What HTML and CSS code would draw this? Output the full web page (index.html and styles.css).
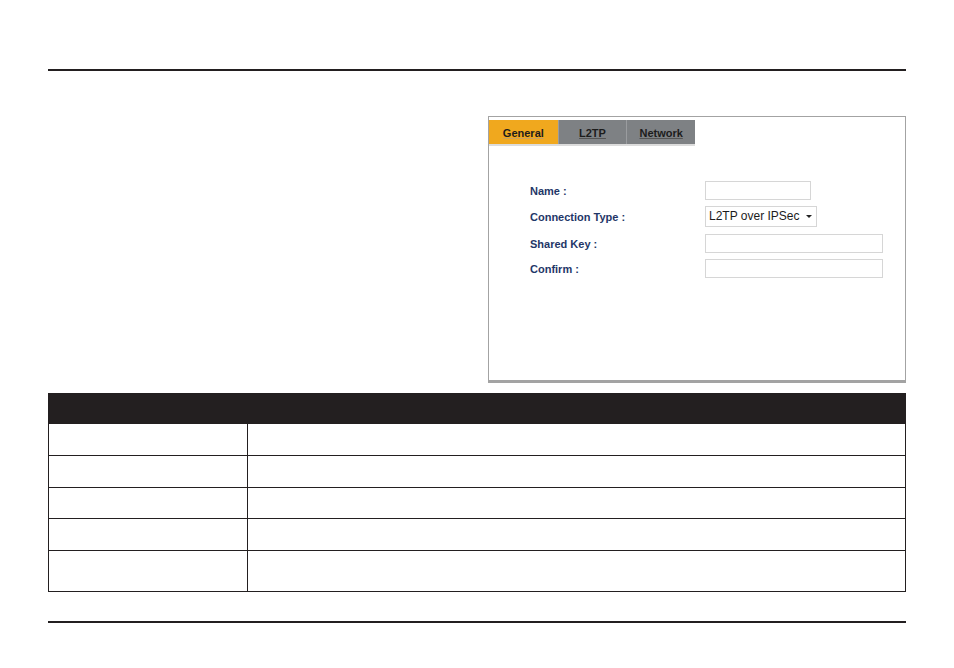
FILE: index.html
```html
<!DOCTYPE html>
<html lang="en">

<head>
    <meta charset="UTF-8">
    <meta name="viewport" content="width=device-width, initial-scale=1.0">
    <title>L2TP over IPSec</title>
    <link rel="stylesheet" href="styles.css">
</head>

<body>
    <div class="page">
        <div class="rule top"></div>

        <div class="figure">
            <div class="shot">
                <div class="tabs">
                    <span class="tab active">General</span>
                    <span class="tab">L2TP</span>
                    <span class="tab">Network</span>
                </div>
                <div class="form">
                    <label>Name :</label>
                    <div class="field short"></div>
                    <label>Connection Type :</label>
                    <div class="select">L2TP over IPSec <span class="caret"></span></div>
                    <label>Shared Key :</label>
                    <div class="field"></div>
                    <label>Confirm :</label>
                    <div class="field"></div>
                </div>
            </div>
        </div>

        <table class="spec">
            <tr class="head"><th></th><th></th></tr>
            <tr class="r1"><td></td><td></td></tr>
            <tr class="r2"><td></td><td></td></tr>
            <tr class="r3"><td></td><td></td></tr>
            <tr class="r4"><td></td><td></td></tr>
            <tr class="r5"><td></td><td></td></tr>
        </table>

        <div class="rule bottom"></div>
    </div>
</body>

</html>
```

FILE: styles.css
```css
* {
    margin: 0;
    padding: 0;
    box-sizing: border-box;
}

body {
    background: #fff;
    font-family: 'Liberation Sans', Arial, sans-serif;
}

.page {
    width: 954px;
    padding: 0 48px;
}

.rule {
    height: 2px;
    background: #231f20;
}

.rule.top {
    margin-top: 69px;
}

.rule.bottom {
    margin-top: 29px;
}

.figure {
    display: flex;
    justify-content: flex-end;
    margin-top: 45px;
}

.shot {
    width: 418px;
    height: 267px;
    border: 1px solid #a3a3a3;
    border-bottom-width: 3px;
    padding-top: 3px;
}

.tabs {
    display: flex;
    width: 206px;
    height: 26px;
    border-bottom: 2px solid #dcdcdc;
}

.tab {
    width: 69px;
    height: 24px;
    line-height: 26px;
    text-align: center;
    background: #7e8184;
    color: #1c1c1c;
    font-size: 11px;
    font-weight: bold;
    text-decoration: underline;
    text-decoration-color: #555;
}

.tab + .tab {
    border-left: 1px solid #9a9c9f;
}

.tab.active {
    background: #f0a81e;
    border-left: none;
    text-decoration-color: #c9a060;
}

.form {
    display: grid;
    grid-template-columns: 175px auto;
    row-gap: 6px;
    align-items: center;
    padding: 35px 0 0 41px;
}

.form label {
    font-size: 11px;
    font-weight: bold;
    color: #1f3768;
}

.field {
    width: 178px;
    height: 19px;
    border: 1px solid #d6d6d6;
}

.field.short {
    width: 106px;
}

.select {
    width: 112px;
    height: 21px;
    border: 1px solid #d6d6d6;
    font-size: 12px;
    color: #1c1c1c;
    line-height: 19px;
    padding-left: 3px;
    margin-bottom: 1px;
    position: relative;
}

.caret {
    position: absolute;
    right: 4px;
    top: 8px;
    border-left: 3px solid transparent;
    border-right: 3px solid transparent;
    border-top: 3px solid #222;
}

.spec {
    width: 858px;
    margin-top: 10px;
    border-collapse: collapse;
}

.spec th,
.spec td {
    border: 1.5px solid #231f20;
}

.spec th:first-child,
.spec td:first-child {
    width: 199px;
}

.spec .head {
    height: 30px;
    background: #231f20;
}

.spec .r1,
.spec .r2,
.spec .r4 {
    height: 32px;
}

.spec .r3 {
    height: 31px;
}

.spec .r5 {
    height: 41px;
}
```
